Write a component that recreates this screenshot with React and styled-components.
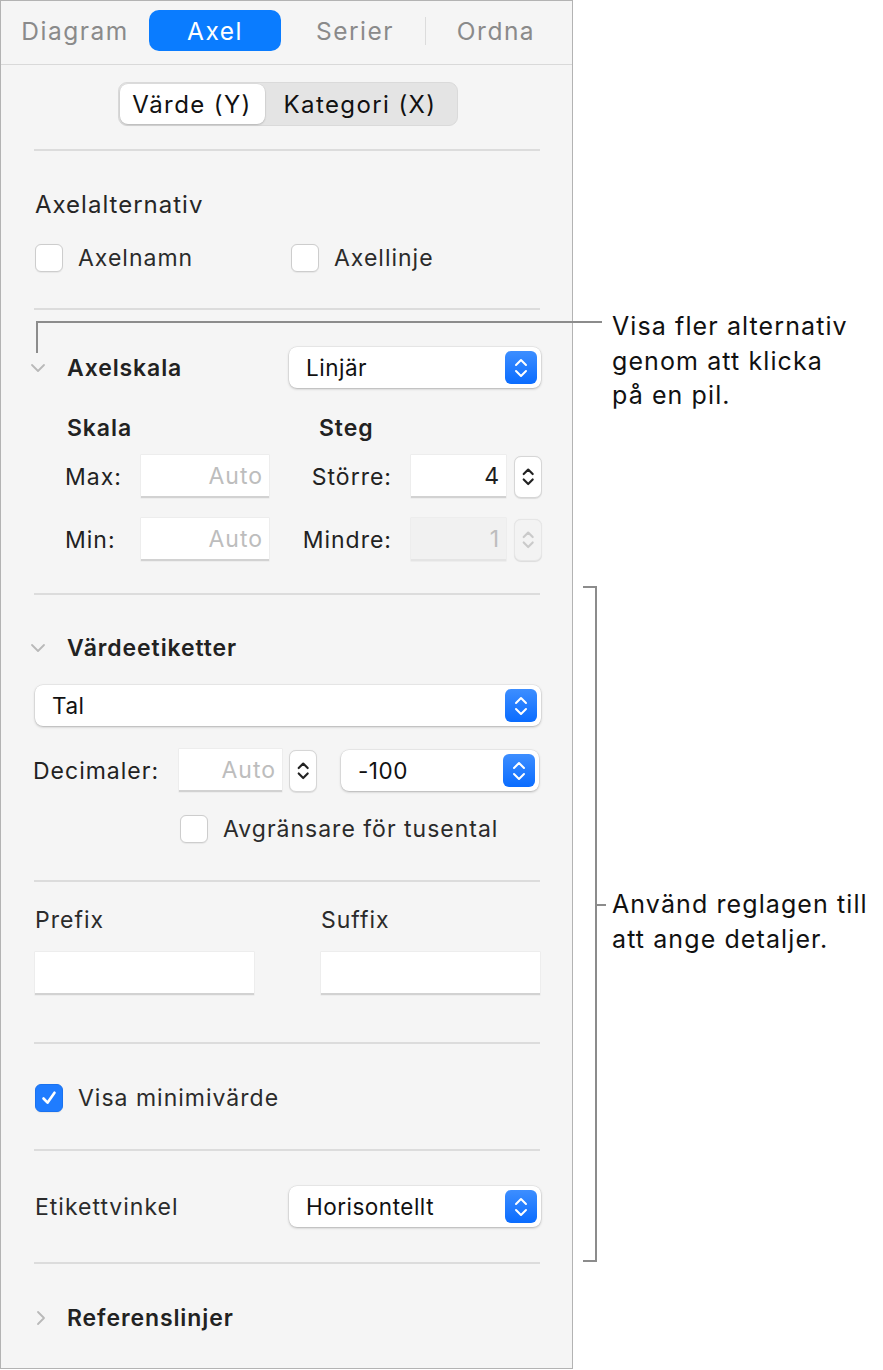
import React from 'react'
import styled, { createGlobalStyle } from 'styled-components'

const GlobalStyle = createGlobalStyle`
  html, body {
    margin: 0;
    padding: 0;
    background: #fff;
  }
  body {
    font-family: Inter, "Open Sans", sans-serif;
    -webkit-font-smoothing: antialiased;
  }
`

const ChevronDown = ({ color = '#b9b9b9' }) => (
  <svg width="16" height="10" viewBox="0 0 16 10" fill="none">
    <path d="M2 2l6 6 6-6" stroke={color} strokeWidth="1.8" strokeLinecap="round" strokeLinejoin="round" />
  </svg>
)

const ChevronRight = ({ color = '#b9b9b9' }) => (
  <svg width="10" height="16" viewBox="0 0 10 16" fill="none">
    <path d="M2 2l6 6-6 6" stroke={color} strokeWidth="1.8" strokeLinecap="round" strokeLinejoin="round" />
  </svg>
)

const UpDown = ({ color = '#fff', size = 1, weight = 2 }) => (
  <svg width={16 * size} height={24 * size} viewBox="0 0 16 24" fill="none">
    <path d="M3 9l5-5 5 5" stroke={color} strokeWidth={weight} strokeLinecap="round" strokeLinejoin="round" />
    <path d="M3 15l5 5 5-5" stroke={color} strokeWidth={weight} strokeLinecap="round" strokeLinejoin="round" />
  </svg>
)

const Check = () => (
  <svg width="20" height="20" viewBox="0 0 20 20" fill="none">
    <path d="M4.5 10.5l4 4.2 7-10" stroke="#fff" strokeWidth="2.6" strokeLinecap="round" strokeLinejoin="round" />
  </svg>
)

export default function App() {
  return (
    <>
      <GlobalStyle />
      <Page>
        <Panel>
          <TabBar>
            <Tab>Diagram</Tab>
            <Tab active>Axel</Tab>
            <Tab>Serier</Tab>
            <TabDivider />
            <Tab>Ordna</Tab>
          </TabBar>

          <Section h={85} pt={17} center>
            <Segmented>
              <Segment active>Värde (Y)</Segment>
              <Segment>Kategori (X)</Segment>
            </Segmented>
          </Section>
          <Divider />

          <Section h={158} pt={39}>
            <Title>Axelalternativ</Title>
            <Row mt={24}>
              <CheckItem w={256}>
                <Box />
                <Label>Axelnamn</Label>
              </CheckItem>
              <CheckItem>
                <Box />
                <Label>Axellinje</Label>
              </CheckItem>
            </Row>
          </Section>
          <Divider />

          <Section h={284} pt={37}>
            <Row>
              <Disclosure><ChevronDown /></Disclosure>
              <Heading w={222}>Axelskala</Heading>
              <Popup w={252}>
                <span>Linjär</span>
                <PopupButton><UpDown /></PopupButton>
              </Popup>
            </Row>
            <Row mt={26} pl={32}>
              <Heading w={252}>Skala</Heading>
              <Heading>Steg</Heading>
            </Row>
            <Row mt={13} pl={30}>
              <FieldLabel w={76}>Max:</FieldLabel>
              <Field w={128} placeholder>Auto</Field>
              <FieldLabel w={142} right pr={19}>Större:</FieldLabel>
              <Field w={95}>4</Field>
              <Stepper ml={8}><UpDown color="#222" size={0.9} weight={2.4} /></Stepper>
            </Row>
            <Row mt={20} pl={30}>
              <FieldLabel w={76}>Min:</FieldLabel>
              <Field w={128} placeholder>Auto</Field>
              <FieldLabel w={142} right pr={19}>Mindre:</FieldLabel>
              <Field w={95} disabled>1</Field>
              <Stepper ml={8} disabled><UpDown color="#cacaca" size={0.9} weight={2.4} /></Stepper>
            </Row>
          </Section>
          <Divider />

          <Section h={286} pt={39}>
            <Row>
              <Disclosure><ChevronDown /></Disclosure>
              <Heading>Värdeetiketter</Heading>
            </Row>
            <Row mt={23}>
              <Popup w={506}>
                <span>Tal</span>
                <PopupButton><UpDown /></PopupButton>
              </Popup>
            </Row>
            <Row mt={23} pl={-2}>
              <FieldLabel w={146}>Decimaler:</FieldLabel>
              <Field w={103} placeholder>Auto</Field>
              <Stepper ml={7}><UpDown color="#222" size={0.9} weight={2.4} /></Stepper>
              <Popup w={198} ml={24}>
                <span>-100</span>
                <PopupButton><UpDown /></PopupButton>
              </Popup>
            </Row>
            <Row mt={23} pl={145}>
              <CheckItem>
                <Box />
                <Label>Avgränsare för tusental</Label>
              </CheckItem>
            </Row>
          </Section>
          <Divider />

          <Section h={161} pt={24}>
            <Row>
              <Label w={286}>Prefix</Label>
              <Label>Suffix</Label>
            </Row>
            <Row mt={18}>
              <Field w={219} />
              <Field w={219} ml={67} />
            </Row>
          </Section>
          <Divider />

          <Section h={106} pt={40}>
            <CheckItem>
              <Box checked><Check /></Box>
              <Label>Visa minimivärde</Label>
            </CheckItem>
          </Section>
          <Divider />

          <Section h={112} pt={35}>
            <Row>
              <Label w={254}>Etikettvinkel</Label>
              <Popup w={252}>
                <span>Horisontellt</span>
                <PopupButton><UpDown /></PopupButton>
              </Popup>
            </Row>
          </Section>
          <Divider />

          <Section h={104} pt={40}>
            <Row>
              <Disclosure indent={6}><ChevronRight /></Disclosure>
              <Heading>Referenslinjer</Heading>
            </Row>
          </Section>
        </Panel>

        <Annotations>
          <Line style={{ left: 36, top: 321, width: 566, height: 2 }} />
          <Line style={{ left: 36, top: 321, width: 2, height: 32 }} />
          <Note style={{ left: 612, top: 309 }}>
            Visa fler alternativ<br />genom att klicka<br />på en pil.
          </Note>

          <Line style={{ left: 583, top: 586, width: 14, height: 2 }} />
          <Line style={{ left: 595, top: 586, width: 2, height: 676 }} />
          <Line style={{ left: 583, top: 1260, width: 14, height: 2 }} />
          <Line style={{ left: 595, top: 904, width: 11, height: 2 }} />
          <Note style={{ left: 612, top: 887 }}>
            Använd reglagen till<br />att ange detaljer.
          </Note>
        </Annotations>
      </Page>
    </>
  )
}

const Page = styled.div`
  position: relative;
  width: 883px;
  height: 1370px;
  display: flex;
  align-items: flex-start;
`

const Panel = styled.div`
  width: 571px;
  height: 1367px;
  border: 1px solid #b3b3b3;
  background: #f5f5f5;
  display: flex;
  flex-direction: column;
  color: #2a2a2a;
`

const TabBar = styled.div`
  height: 64px;
  box-sizing: border-box;
  border-bottom: 1px solid #d9d9d9;
  display: flex;
  align-items: center;
  padding: 0 0 4px 4px;
`

const Tab = styled.div`
  width: ${p => (p.active ? 132 : 140)}px;
  height: 41px;
  margin-right: ${p => (p.active ? 4 : 0)}px;
  &:first-child { margin-right: 4px; }
  display: flex;
  align-items: center;
  justify-content: center;
  border-radius: 10px;
  font-size: 24.5px;
  letter-spacing: 1.5px;
  color: ${p => (p.active ? '#fff' : '#8a8a8a')};
  background: ${p => (p.active ? '#0a7cff' : 'transparent')};
`

const TabDivider = styled.div`
  width: 1px;
  height: 28px;
  background: #dcdcdc;
`

const Section = styled.div`
  height: ${p => p.h}px;
  padding: ${p => p.pt}px 0 0 ${p => (p.center ? 0 : 34)}px;
  box-sizing: border-box;
  display: flex;
  flex-direction: column;
  align-items: ${p => (p.center ? 'center' : 'flex-start')};
`

const Divider = styled.div`
  height: 2px;
  margin: -1px 32px 0 33px;
  background: #dcdcdc;
  flex-shrink: 0;
`

const Row = styled.div`
  display: flex;
  align-items: center;
  margin-top: ${p => p.mt || 0}px;
  margin-left: ${p => p.pl || 0}px;
`

const Segmented = styled.div`
  display: flex;
  height: 44px;
  width: 340px;
  margin-left: 2px;
  border-radius: 9px;
  background: #e4e4e4;
  border: 1px solid #dadada;
  box-sizing: border-box;
  padding: 1px;
`

const Segment = styled.div`
  width: ${p => (p.active ? 145 : 191)}px;
  display: flex;
  align-items: center;
  justify-content: center;
  border-radius: 8px;
  font-size: 24px;
  letter-spacing: 1.4px;
  color: #111;
  background: ${p => (p.active ? '#fff' : 'transparent')};
  box-shadow: ${p => (p.active ? '0 1px 2px rgba(0,0,0,0.18), 0 0 0 0.5px rgba(0,0,0,0.06)' : 'none')};
`

const Title = styled.div`
  font-size: 24px;
  line-height: 30px;
  letter-spacing: 1px;
  color: #262626;
`

const Label = styled.div`
  font-size: 23px;
  line-height: 28px;
  letter-spacing: 1px;
  color: #2b2b2b;
  width: ${p => (p.w ? `${p.w}px` : 'auto')};
  flex-shrink: 0;
`

const Heading = styled.div`
  font-size: 23px;
  line-height: 28px;
  letter-spacing: 0.9px;
  font-weight: 600;
  color: #222;
  width: ${p => (p.w ? `${p.w}px` : 'auto')};
  flex-shrink: 0;
`

const Disclosure = styled.div`
  width: 32px;
  margin-left: -5px;
  margin-right: 5px;
  padding-left: ${p => p.indent || 0}px;
  box-sizing: border-box;
  display: flex;
  align-items: center;
`

const CheckItem = styled.div`
  display: flex;
  align-items: center;
  gap: 15px;
  width: ${p => (p.w ? `${p.w}px` : 'auto')};
`

const Box = styled.div`
  width: 28px;
  height: 28px;
  box-sizing: border-box;
  border-radius: 6px;
  background: ${p => (p.checked ? '#1f7cff' : '#fff')};
  border: 1px solid ${p => (p.checked ? '#1a72ef' : '#cdcdcd')};
  box-shadow: 0 0.5px 1px rgba(0,0,0,0.06);
  display: flex;
  align-items: center;
  justify-content: center;
  flex-shrink: 0;
`

const Popup = styled.div`
  width: ${p => p.w}px;
  height: 41px;
  margin-left: ${p => p.ml || 0}px;
  box-sizing: border-box;
  background: #fff;
  border-radius: 8px;
  box-shadow: 0 1px 2.5px rgba(0,0,0,0.25), 0 0 0 0.5px rgba(0,0,0,0.08);
  display: flex;
  align-items: center;
  justify-content: space-between;
  padding: 0 4px 0 17px;
  font-size: 22.5px;
  letter-spacing: 0.5px;
  color: #111;
`

const PopupButton = styled.div`
  width: 32px;
  height: 33px;
  border-radius: 6px;
  background: linear-gradient(#3d8eff, #0a6cff);
  display: flex;
  align-items: center;
  justify-content: center;
`

const FieldLabel = styled.div`
  font-size: 23px;
  letter-spacing: 1px;
  color: #222;
  width: ${p => p.w}px;
  text-align: ${p => (p.right ? 'right' : 'left')};
  padding-right: ${p => p.pr || 0}px;
  box-sizing: border-box;
  flex-shrink: 0;
`

const Field = styled.div`
  width: ${p => p.w}px;
  height: 43px;
  margin-left: ${p => p.ml || 0}px;
  box-sizing: border-box;
  background: ${p => (p.disabled ? '#f1f1f1' : '#fff')};
  border-bottom: 2px solid ${p => (p.disabled ? '#e4e4e4' : '#d2d2d2')};
  box-shadow: 0 0 0 0.5px #e6e6e6;
  display: flex;
  align-items: center;
  justify-content: flex-end;
  padding-right: 6px;
  font-size: 23px;
  letter-spacing: 1px;
  color: ${p => (p.placeholder || p.disabled ? '#bdbdbd' : '#1e1e1e')};
  flex-shrink: 0;
`

const Stepper = styled.div`
  width: 28px;
  height: 42px;
  margin-left: ${p => p.ml || 0}px;
  box-sizing: border-box;
  border-radius: 7px;
  background: ${p => (p.disabled ? '#f3f3f3' : '#fff')};
  border: 1px solid ${p => (p.disabled ? '#e6e6e6' : '#d6d6d6')};
  box-shadow: 0 0.5px 1px rgba(0,0,0,0.1);
  display: flex;
  align-items: center;
  justify-content: center;
  flex-shrink: 0;
`

const Annotations = styled.div`
  position: absolute;
  inset: 0;
  pointer-events: none;
`

const Line = styled.div`
  position: absolute;
  background: #8c8c8c;
`

const Note = styled.div`
  position: absolute;
  font-size: 25px;
  line-height: 34.5px;
  letter-spacing: 1.1px;
  color: #111;
  white-space: nowrap;
`
